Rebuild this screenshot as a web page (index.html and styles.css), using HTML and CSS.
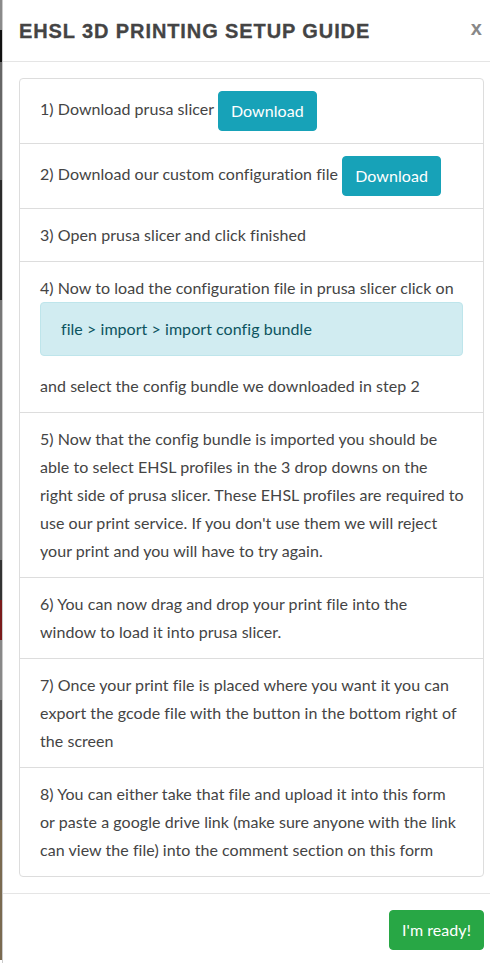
FILE: index.html
```html
<!DOCTYPE html>
<html>
<head>
<meta charset="utf-8">
<link rel="stylesheet" href="styles.css">
</head>
<body>
<div class="backdrop"></div>
<div class="modal">
  <div class="modal-header">
    <h5 class="modal-title">EHSL 3D Printing Setup Guide</h5>
    <span class="close">x</span>
  </div>
  <div class="modal-body">
    <ul class="list-group">
      <li class="list-group-item">1) Download prusa slicer <a class="btn btn-info">Download</a></li>
      <li class="list-group-item">2) Download our custom configuration file <a class="btn btn-info">Download</a></li>
      <li class="list-group-item">3) Open prusa slicer and click finished</li>
      <li class="list-group-item">4) Now to load the configuration file in prusa slicer click on
        <div class="alert">file &gt; import &gt; import config bundle</div>
        and select the config bundle we downloaded in step 2</li>
      <li class="list-group-item">5) Now that the config bundle is imported you should be<br>able to select EHSL profiles in the 3 drop downs on the<br>right side of prusa slicer. These EHSL profiles are required to<br>use our print service. If you don't use them we will reject<br>your print and you will have to try again.</li>
      <li class="list-group-item">6) You can now drag and drop your print file into the<br>window to load it into prusa slicer.</li>
      <li class="list-group-item">7) Once your print file is placed where you want it you can<br>export the gcode file with the button in the bottom right of<br>the screen</li>
      <li class="list-group-item">8) You can either take that file and upload it into this form<br>or paste a google drive link (make sure anyone with the link<br>can view the file) into the comment section on this form</li>
    </ul>
  </div>
  <div class="modal-footer">
    <a class="btn btn-success">I'm ready!</a>
  </div>
</div>
</body>
</html>
```
FILE: styles.css
```css
html, body {
  margin: 0;
  padding: 0;
  overflow: hidden;
  width: 490px;
  height: 965px;
}
body {
  display: flex;
  align-items: flex-start;
  font-family: Lato, "Liberation Sans", sans-serif;
  font-size: 16px;
  letter-spacing: 0.05px;
  color: #444;
  background: #fff;
}
.backdrop {
  flex: 0 0 2px;
  height: 965px;
  background: linear-gradient(#8a8a8a 0 30px, #111 30px 62px, #666 62px 180px, #2a2a2a 180px 300px, #777 300px 560px, #333 560px 600px, #7a1a1a 600px 640px, #888 640px 700px, #555 700px 820px, #7a6a50 820px 960px, #fff 960px);
}
.modal {
  flex: 0 0 498px;
  box-sizing: border-box;
  border-left: 1px solid rgba(0,0,0,.2);
  background: #fff;
}
.modal-header {
  display: flex;
  justify-content: space-between;
  align-items: flex-start;
  padding: 16px 16px 15px 16px;
  border-bottom: 1px solid #e5e5e5;
}
.modal-title {
  margin: 0;
  font-family: "Liberation Sans", Arial, sans-serif;
  font-weight: 700;
  font-size: 20px;
  line-height: 30px;
  letter-spacing: 0.9px;
  text-transform: uppercase;
  color: #444;
  -webkit-text-stroke: 0.3px #444;
}
.close {
  font-family: "Liberation Sans", Arial, sans-serif;
  font-weight: 700;
  font-size: 20px;
  line-height: 24px;
  color: #888;
  margin-right: 2px;
}
.modal-body {
  padding: 16px;
}
.list-group {
  list-style: none;
  margin: 0;
  padding: 0;
  border: 1px solid #ddd;
  border-radius: 4px;
}
.list-group-item {
  padding: 12px 17px 12px 20px;
  line-height: 28px;
  border-top: 1px solid #ddd;
}
.list-group-item:first-child {
  border-top: 0;
}
.btn {
  display: inline-block;
  padding: 7px 12px;
  line-height: 24px;
  border-radius: 4px;
  color: #fff;
  font-size: 16px;
  border: 1px solid transparent;
  vertical-align: middle;
}
.btn-info {
  background: #17a2b8;
  border-color: #17a2b8;
}
.btn-success {
  background: #28a745;
  border-color: #28a745;
}
.alert {
  margin: 0 3px 16px 0;
  padding: 12px 20px;
  background: #d1ecf1;
  border: 1px solid #bee5eb;
  border-radius: 4px;
  color: #0c5460;
}
.modal-footer {
  display: flex;
  justify-content: flex-end;
  padding: 16px 16px 13px;
  border-top: 1px solid #e5e5e5;
}
```
